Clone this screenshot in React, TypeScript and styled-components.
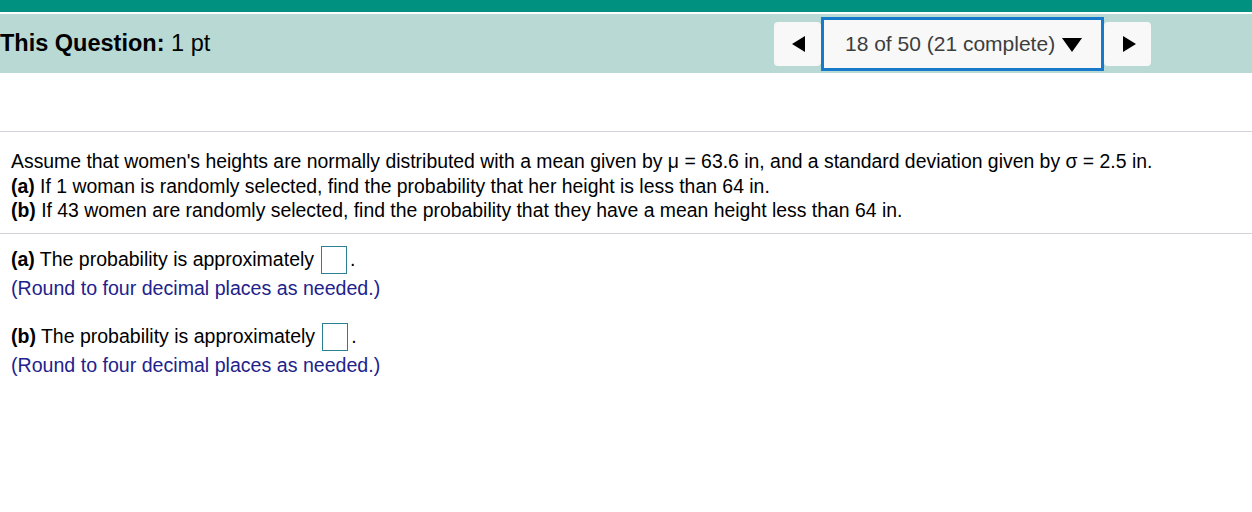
import styled, { createGlobalStyle } from "styled-components";

const GlobalStyle = createGlobalStyle`
  html, body {
    margin: 0;
    padding: 0;
    background: #ffffff;
    font-family: "Liberation Sans", Arial, sans-serif;
    color: #000000;
  }
`;

function App() {
  return (
    <Page>
      <GlobalStyle />
      <TopStripe />
      <Header>
        <Title>
          <strong>This Question:</strong> 1 pt
        </Title>
        <Nav>
          <ArrowButton aria-label="Previous question">
            <Triangle direction="left" />
          </ArrowButton>
          <Picker>
            18 of 50 (21 complete)
            <Caret />
          </Picker>
          <ArrowButton aria-label="Next question">
            <Triangle direction="right" />
          </ArrowButton>
        </Nav>
      </Header>

      <Question>
        <Line>
          Assume that women's heights are normally distributed with a mean given
          by μ = 63.6 in, and a standard deviation given by σ = 2.5 in.
        </Line>
        <Line>
          <strong>(a)</strong> If 1 woman is randomly selected, find the
          probability that her height is less than 64 in.
        </Line>
        <Line>
          <strong>(b)</strong> If 43 women are randomly selected, find the
          probability that they have a mean height less than 64 in.
        </Line>
      </Question>

      <Answers>
        <AnswerBlock>
          <AnswerLine>
            <strong>(a)</strong> The probability is approximately
            <AnswerInput type="text" aria-label="Answer a" />.
          </AnswerLine>
          <Hint>(Round to four decimal places as needed.)</Hint>
        </AnswerBlock>
        <AnswerBlock>
          <AnswerLine>
            <strong>(b)</strong> The probability is approximately
            <AnswerInput type="text" aria-label="Answer b" />.
          </AnswerLine>
          <Hint>(Round to four decimal places as needed.)</Hint>
        </AnswerBlock>
      </Answers>
    </Page>
  );
}

const Page = styled.div`
  width: 1252px;
  min-height: 512px;
  background: #ffffff;
`;

const TopStripe = styled.div`
  height: 12px;
  background: #009180;
  border-bottom: 2px solid #ffffff;
`;

const Header = styled.div`
  display: flex;
  justify-content: space-between;
  align-items: center;
  height: 59px;
  padding-right: 101px;
  background: #b9d9d5;
`;

const Title = styled.div`
  font-size: 23.5px;
  color: #000000;

  strong {
    font-weight: bold;
  }
`;

const Nav = styled.div`
  display: flex;
  align-items: center;
`;

const ArrowButton = styled.button`
  display: flex;
  align-items: center;
  justify-content: center;
  width: 47px;
  height: 44px;
  padding: 0;
  border: none;
  border-radius: 4px;
  background: #f8f8f8;
  cursor: pointer;
`;

const Triangle = styled.span<{ direction: "left" | "right" }>`
  width: 0;
  height: 0;
  border-top: 8px solid transparent;
  border-bottom: 8px solid transparent;
  ${({ direction }) =>
    direction === "left"
      ? "border-right: 13px solid #000; margin-left: 2px;"
      : "border-left: 13px solid #000; margin-left: 4px;"}
`;

const Picker = styled.div`
  display: flex;
  align-items: center;
  box-sizing: border-box;
  width: 283px;
  height: 54px;
  padding-left: 21px;
  border: 3px solid #1679c9;
  background: #f8f8f8;
  font-size: 21px;
  color: #3d3d3d;
`;

const Caret = styled.span`
  width: 0;
  height: 0;
  margin-left: 7px;
  margin-top: 2px;
  border-left: 10px solid transparent;
  border-right: 10px solid transparent;
  border-top: 14px solid #000;
`;

const Question = styled.div`
  margin-top: 58px;
  padding: 17px 11px 10px;
  border-top: 1px solid #d3d3dc;
  border-bottom: 1px solid #d3d3dc;
`;

const Line = styled.div`
  font-size: 19.4px;
  line-height: 24.5px;

  strong {
    font-weight: bold;
  }
`;

const Answers = styled.div`
  padding: 12px 11px 0;
  display: flex;
  flex-direction: column;
  gap: 21px;
`;

const AnswerBlock = styled.div`
  display: flex;
  flex-direction: column;
`;

const AnswerLine = styled.div`
  display: flex;
  align-items: center;
  height: 28px;
  font-size: 19.5px;

  strong {
    font-weight: bold;
    margin-right: 5px;
  }
`;

const AnswerInput = styled.input`
  box-sizing: border-box;
  width: 26px;
  height: 28px;
  margin: 0 3px 0 7px;
  padding: 0;
  border: 1.5px solid #2a8091;
  background: #ffffff;
`;

const Hint = styled.div`
  font-size: 19.6px;
  line-height: 28px;
  color: #22228c;
`;

export default App;
